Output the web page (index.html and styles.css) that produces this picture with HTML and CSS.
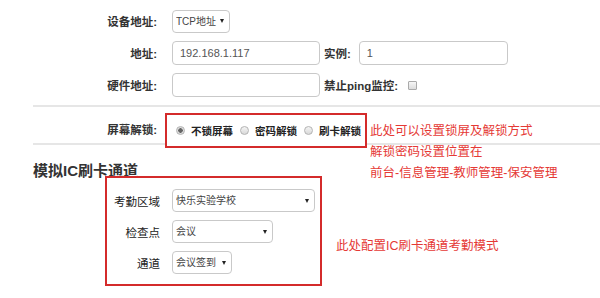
FILE: index.html
```html
<!DOCTYPE html>
<html lang="zh-CN">
<head>
    <meta charset="UTF-8">
    <meta name="viewport" content="width=device-width, initial-scale=1.0">
    <title>设备设置</title>
    <link rel="stylesheet" href="styles.css">
</head>
<body>
    <div class="page">
        <div class="settings">
            <div class="row">
                <label class="label">设备地址:</label>
                <span class="select w-tcp"><select><option>TCP地址</option></select></span>
            </div>
            <div class="row">
                <label class="label">地址:</label>
                <input class="input" type="text" value="192.168.1.117">
                <label class="label-inline">实例:</label>
                <input class="input input-wide" type="text" value="1">
            </div>
            <div class="row">
                <label class="label">硬件地址:</label>
                <input class="input" type="text">
                <label class="label-inline">禁止ping监控:</label>
                <input class="check" type="checkbox">
            </div>
        </div>

        <div class="row lock-row">
            <label class="label">屏幕解锁:</label>
            <div class="radio-group">
                <label class="radio"><input type="radio" name="lock" checked>不锁屏幕</label>
                <label class="radio"><input type="radio" name="lock">密码解锁</label>
                <label class="radio"><input type="radio" name="lock">刷卡解锁</label>
            </div>
        </div>

        <h2 class="section-title">模拟IC刷卡通道</h2>

        <div class="ic-box">
            <div class="ic-row">
                <label class="ic-label">考勤区域</label>
                <span class="select w-area"><select><option>快乐实验学校</option></select></span>
            </div>
            <div class="ic-row">
                <label class="ic-label">检查点</label>
                <span class="select w-point"><select><option>会议</option></select></span>
            </div>
            <div class="ic-row">
                <label class="ic-label">通道</label>
                <span class="select w-channel"><select><option>会议签到</option></select></span>
            </div>
        </div>

        <p class="note note-lock">此处可以设置锁屏及解锁方式<br>解锁密码设置位置在<br>前台-信息管理-教师管理-保安管理</p>
        <p class="note note-ic">此处配置IC刷卡通道考勤模式</p>
    </div>
</body>
</html>
```

FILE: styles.css
```css
body {
    margin: 0;
    font-family: "Liberation Sans", "Noto Sans CJK SC", sans-serif;
    font-size: 11px;
    color: #333;
    background-color: #fff;
}

.page {
    position: relative;
    height: 298px;
    padding-top: 9px;
    box-sizing: border-box;
    overflow: hidden;
}

.settings {
    display: flex;
    flex-direction: column;
    gap: 8px;
    margin-left: 33px;
    padding-bottom: 8px;
    border-bottom: 2px solid #e6e6e6;
}

.row {
    display: flex;
    align-items: center;
    height: 24px;
}

.label {
    width: 124px;
    margin-right: 15px;
    text-align: right;
    font-size: 11.5px;
    font-weight: bold;
    color: #333;
}

.label-inline {
    margin: 0 8px 0 4px;
    font-size: 11.5px;
    font-weight: bold;
}

.input {
    width: 148px;
    height: 24px;
    padding: 0 7px;
    box-sizing: border-box;
    border: 1px solid #c9c9c9;
    border-radius: 4px;
    font-family: inherit;
    font-size: 11px;
    color: #555;
}

.input-wide {
    width: 149px;
}

.check {
    appearance: none;
    width: 9px;
    height: 9px;
    margin: 0 0 0 2px;
    border: 1px solid #aaa;
    border-radius: 1px;
    background: linear-gradient(#f6f6f6, #dcdcdc);
}

.select {
    position: relative;
    display: inline-block;
}

.select::after {
    content: "";
    position: absolute;
    right: 6px;
    top: 50%;
    margin-top: -2px;
    border-left: 2.5px solid transparent;
    border-right: 2.5px solid transparent;
    border-top: 4px solid #222;
    pointer-events: none;
}

.select select {
    appearance: none;
    width: 100%;
    height: 23px;
    padding: 0 10px 0 3px;
    border: 1px solid #c9c9c9;
    border-radius: 4px;
    background: #fff;
    font-family: inherit;
    font-size: 10px;
    color: #444;
}

.w-tcp { width: 58px; }
.w-area { width: 143px; }
.w-point { width: 101px; }
.w-channel { width: 60px; }

.lock-row {
    align-items: flex-start;
    height: 36px;
    margin-left: 33px;
    border-bottom: 2px solid #e6e6e6;
}

.lock-row .label {
    margin: 6px 8px 0 0;
    line-height: 35px;
}

.radio-group {
    display: flex;
    align-items: center;
    gap: 7px;
    width: 202px;
    height: 35px;
    margin-top: 6px;
    padding-left: 9px;
    box-sizing: border-box;
    border: 2px solid #d42b2b;
    background-color: #fff;
}

.radio {
    display: flex;
    align-items: center;
    gap: 6px;
    font-size: 10.5px;
    font-weight: bold;
    color: #222;
}

.radio input {
    appearance: none;
    width: 9px;
    height: 9px;
    margin: 0;
    border: 1px solid #b3b3b3;
    border-radius: 50%;
    background: linear-gradient(#f4f4f4, #d9d9d9);
}

.radio input:checked {
    background: radial-gradient(circle, #666 0 2px, #dedede 2.5px);
}

.section-title {
    margin: 16px 0 0 33px;
    font-size: 15px;
    line-height: 20px;
    font-weight: bold;
    color: #333;
}

.ic-box {
    position: relative;
    display: flex;
    flex-direction: column;
    gap: 8px;
    width: 217px;
    margin: -5px 0 0 105px;
    padding: 11px 0 10px;
    box-sizing: border-box;
    border: 2px solid #d42b2b;
}

.ic-row {
    display: flex;
    align-items: center;
    height: 23px;
}

.ic-label {
    width: 53px;
    margin-right: 12px;
    text-align: right;
    font-size: 11.5px;
    color: #222;
}

.note {
    position: absolute;
    margin: 0;
    color: #e53935;
    font-size: 12.5px;
    line-height: 21px;
}

.note-lock {
    left: 370px;
    top: 121px;
}

.note-ic {
    left: 336px;
    top: 236px;
}
```
